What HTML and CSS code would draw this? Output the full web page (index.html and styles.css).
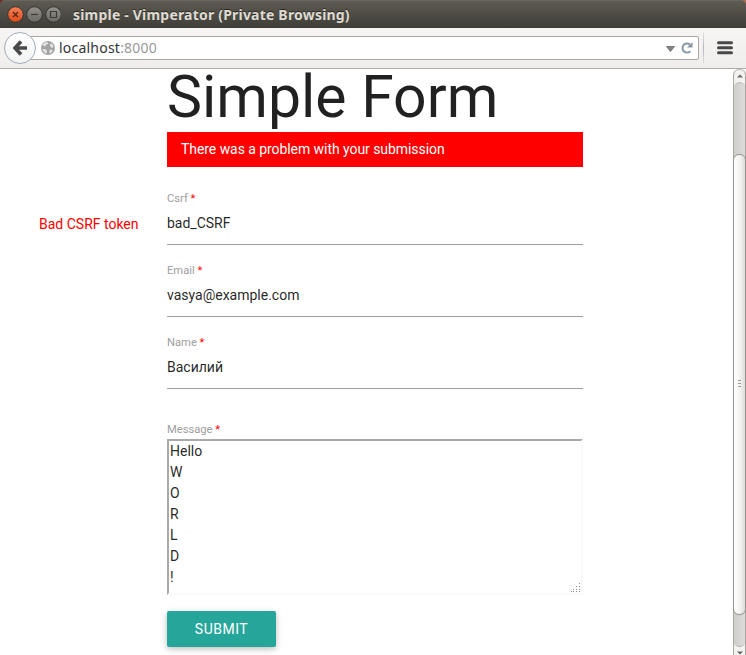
FILE: index.html
```html
<!DOCTYPE html>
<html lang="en">
<head>
<meta charset="utf-8">
<title>simple</title>
<link rel="stylesheet" href="styles.css">
</head>
<body>
<header class="titlebar">
  <svg class="controls" width="54" height="18" viewBox="0 0 54 18">
    <defs>
      <linearGradient id="close" x1="0" y1="0" x2="0" y2="1"><stop offset="0" stop-color="#f58059"/><stop offset="1" stop-color="#df4b18"/></linearGradient>
      <linearGradient id="gray" x1="0" y1="0" x2="0" y2="1"><stop offset="0" stop-color="#93918a"/><stop offset="1" stop-color="#6b6963"/></linearGradient>
    </defs>
    <g stroke="#35332e" stroke-width="1">
      <circle cx="8.5" cy="8.500" r="7.800" fill="url(#close)"/>
      <circle cx="27.5" cy="8.500" r="7.800" fill="url(#gray)"/>
      <circle cx="46.5" cy="8.500" r="7.800" fill="url(#gray)"/>
    </g>
    <path d="M6 6l5 5M11 6l-5 5" stroke="#5c2413" stroke-width="1.3"/>
    <path d="M24 8.500h7" stroke="#3c3b37" stroke-width="1.2"/>
    <path d="M43.500 5.500h6v6h-6z" fill="none" stroke="#3c3b37" stroke-width="1.2"/>
  </svg>
  <span class="window-title">simple - Vimperator (Private Browsing)</span>
</header>
<nav class="toolbar">
  <div class="back">
    <svg width="14" height="16" viewBox="0 0 14 16"><path d="M8 1.5L2 8l6 6.500M2.500 8H14" fill="none" stroke="#4a4a4a" stroke-width="3.600"/></svg>
  </div>
  <div class="urlbar">
    <svg class="globe" width="14" height="14" viewBox="0 0 14 14"><circle cx="7" cy="7" r="7" fill="#a3a3a3"/><path d="M1.500 4L4 1.500l2-.5 1.500 1.500L5 4 3.500 5.500zM9 3l2-.5 1.500 3-1 1.500-2-1zM1 8.500L4 8l2 1.500-.5 3L4 12zM8.500 8.500l3.500.500-2 3-1.500.500z" fill="#e6e6e6"/></svg>
    <span class="host">localhost<span class="port">:8000</span></span>
    <svg class="drop" width="9" height="6" viewBox="0 0 9 6"><path d="M.5.500h8L4.500 5.500z" fill="#858585" stroke="#666" stroke-width=".8"/></svg>
    <svg class="reload" width="12" height="12" viewBox="0 0 12 12"><path d="M9.300 9.200A4.500 4.500 0 1 1 8.800 2.500" fill="none" stroke="#8796a3" stroke-width="2"/><path d="M11.500 0v5.500H6z" fill="#8796a3"/></svg>
  </div>
  <span class="divider"></span>
  <svg class="menu" width="16" height="14" viewBox="0 0 16 14"><path d="M1.500 1.800h13M1.500 6.800h13M1.500 11.800h13" stroke="#484848" stroke-width="3" stroke-linecap="round"/></svg>
</nav>
<div class="viewport">
  <main class="page">
    <h1>Simple Form</h1>
    <div class="alert">There was a problem with your submission</div>
    <form>
      <div class="error">Bad CSRF token</div>
      <div class="field">
        <label for="csrf">Csrf <b>*</b></label>
        <input id="csrf" value="bad_CSRF">
      </div>
      <div class="field">
        <label for="email">Email <b>*</b></label>
        <input id="email" value="vasya@example.com">
      </div>
      <div class="field">
        <label for="name">Name <b>*</b></label>
        <input id="name" value="Василий">
      </div>
      <div class="field message">
        <label for="message">Message <b>*</b></label>
        <textarea id="message" spellcheck="false">Hello
W
O
R
L
D
!</textarea>
        <svg class="grip" width="10" height="10" viewBox="0 0 10 10"><path d="M8 .5h1M5 3.500h1M8 3.500h1M2 6.500h1M5 6.500h1M8 6.500h1M0 8.500h1M2 8.500h1M5 8.500h1M8 8.500h1" stroke="#8b8b8b"/></svg>
      </div>
      <button type="button">SUBMIT</button>
    </form>
  </main>
  <aside class="scrollbar">
    <div class="arrow up"><svg width="6" height="4" viewBox="0 0 6 4"><path d="M0 3.500L3 .5l3 3z" fill="#666"/></svg></div>
    <div class="trough"><div class="thumb"><i></i><i></i><i></i></div></div>
    <div class="arrow down"><svg width="6" height="4" viewBox="0 0 6 4"><path d="M0 .5l3 3 3-3z" fill="#666"/></svg></div>
  </aside>
</div>
</body>
</html>
```

FILE: styles.css
```css
* { box-sizing: border-box; }
html { background: linear-gradient(90deg, #702c24 50%, #b56f4b 50%); }
body {
  margin: 0;
  width: 746px;
  height: 655px;
  display: flex;
  flex-direction: column;
  font: 14px/21px Roboto, sans-serif;
  color: rgba(0, 0, 0, .87);
}
.titlebar {
  height: 28px;
  flex: none;
  display: flex;
  align-items: center;
  padding: 1px 0 0 7px;
  background: linear-gradient(#5e5b52, #57554c 20%, #3e3d38);
  border-top: 1px solid #696760;
  border-radius: 5px 5px 0 0;
}
.controls { display: block; flex: none; margin-right: 12px; }
.window-title {
  font: bold 14px/20px "Noto Sans", sans-serif;
  letter-spacing: .2px;
  color: #dfdbd2;
  text-shadow: 0 -1px #2b2a26;
  white-space: nowrap;
}
.toolbar {
  height: 41px;
  flex: none;
  display: flex;
  align-items: center;
  padding: 0 13px 1px 4px;
  background: linear-gradient(#f6f5f4, #efeeed);
  border-bottom: 1px solid #b0ada9;
}
.back {
  width: 32px;
  height: 32px;
  flex: none;
  z-index: 1;
  display: flex;
  align-items: center;
  justify-content: center;
  border: 1px solid #a2acb8;
  border-radius: 50%;
  background: linear-gradient(#fff, #f2f3f4);
}
.urlbar {
  flex: 1;
  height: 24px;
  margin-left: -8px;
  display: flex;
  align-items: center;
  padding: 0 5px 0 12px;
  background: #fff;
  border: 1px solid #aaa7a3;
  border-radius: 0 2px 2px 0;
}
.globe { margin-right: 4px; }
.host {
  flex: 1;
  padding-top: 1px;
  font: 14px/20px "Noto Sans", sans-serif;
  letter-spacing: .22px;
  color: #333;
}
.port { color: #999; }
.drop { margin: 2px 6px 0 0; }
.divider { width: 1px; height: 32px; margin: 0 13px 0 4px; background: linear-gradient(#e2e3e4, #b0b7bc, #e2e3e4); }
.viewport { flex: 1; min-height: 0; display: flex; background: #fff; }
.page { flex: 1; padding-left: 167px; }
h1 {
  margin: 0 0 8px;
  font-size: 58.9px;
  font-weight: 400;
  line-height: 55px;
  white-space: nowrap;
}
.alert {
  width: 416px;
  height: 35px;
  padding: 7px 14px;
  background: #f00;
  color: #fff;
  letter-spacing: -.06px;
}
form { position: relative; width: 416px; padding-top: 21px; }
.error { position: absolute; top: 47px; left: -128px; color: #f00; white-space: nowrap; }
.field { height: 72px; padding-top: 2px; }
label { display: block; font-size: 11.200px; line-height: 18px; color: #9e9e9e; }
label b { font-weight: 400; color: #f00; }
input {
  display: block;
  width: 100%;
  height: 37px;
  padding: 0 0 7px;
  border: 0;
  border-bottom: 1px solid #9e9e9e;
  margin: 0;
  background: none;
  font: inherit;
  color: inherit;
  outline: 0;
}
.message { position: relative; height: 207px; padding-top: 17px; }
textarea {
  display: block;
  width: 416px;
  height: 156px;
  margin: 0;
  padding: 0 1px;
  border: 2px solid;
  border-color: #aaa #fafafa #fafafa #aaa;
  background: #fff;
  font: inherit;
  color: inherit;
  resize: none;
  overflow: hidden;
}
.grip { position: absolute; right: 2px; top: 179px; }
button {
  display: block;
  width: 109px;
  height: 36px;
  padding: 0;
  border: 0;
  border-radius: 2px;
  background: #26a69a;
  box-shadow: 0 2px 5px rgba(0, 0, 0, .16), 0 2px 10px rgba(0, 0, 0, .12);
  color: #fff;
  font: 14px/36px Roboto, sans-serif;
  letter-spacing: .5px;
}
.scrollbar {
  width: 13px;
  flex: none;
  display: flex;
  flex-direction: column;
  background: #f3f2f1;
  border: 1px solid #aaa7a3;
  border-width: 0 1px;
  border-radius: 6px 6px 0 0;
}
.arrow { height: 13px; display: flex; align-items: center; justify-content: center; border-top: 1px solid #bbb8b4; border-radius: 6px 6px 0 0; }
.down { height: 8px; padding-top: 4px; border: 0; }
.trough {
  flex: 1;
  padding-top: 71px;
  background: linear-gradient(90deg, #cfcdca, #dedcda);
  border: 1px solid #bbb8b4;
  border-width: 1px 0;
  border-radius: 6px;
}
.thumb {
  height: 461px;
  margin: 0 -1px;
  padding-bottom: 2px;
  display: flex;
  flex-direction: column;
  align-items: center;
  justify-content: center;
  gap: 2px;
  background: linear-gradient(90deg, #fff, #f5f4f3 50%, #dedcda);
  border: 1px solid #96938f;
  border-radius: 6px;
}
.thumb i { width: 3px; height: 1px; background: #999; }
```
